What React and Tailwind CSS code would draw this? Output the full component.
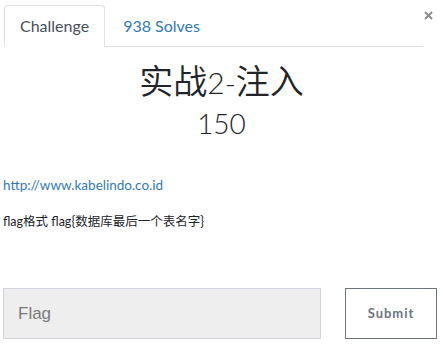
export default function App() {
  return (
    <div className="w-[443px] h-[344px] bg-white relative overflow-hidden" style={{ fontFamily: 'Lato, "Noto Sans CJK SC", sans-serif' }}>
      <div className="pt-[5px] pl-[4px] w-[423px]">
        <div className="flex items-end border-b border-[#dee2e6] h-[42px]">
          <div className="h-[42px] -mb-px px-[15px] flex items-center border border-[#dee2e6] border-b-white bg-white rounded-t-[4px] text-[16px] text-[#495057]">
            Challenge
          </div>
          <div className="h-[41px] ml-[2px] px-[16px] flex items-center text-[16px] text-[#337ab7]">
            938 Solves
          </div>
        </div>
      </div>
      <svg className="absolute left-[424px] top-[11px]" width="9" height="9" viewBox="0 0 9 9">
        <path d="M1 1 L8 8 M8 1 L1 8" stroke="#8c8c8c" strokeWidth="2" />
      </svg>
      <div className="flex flex-col items-center mt-[14px]">
        <div className="text-[34px] leading-[40px] font-[350] text-[#212529]">
          实战<span className="text-[30px] font-light">2-</span>注入
        </div>
        <div className="text-[28px] leading-[34px] font-light text-[#212529] mt-[4px]">150</div>
      </div>
      <div className="pl-[3px] mt-[35px]">
        <div className="text-[13.5px] leading-[20px] text-[#337ab7]">http://www.kabelindo.co.id</div>
        <div className="text-[12.5px] leading-[20px] text-[#212529] mt-[17px]">flag格式 flag{"{"}数据库最后一个表名字{"}"}</div>
      </div>
      <div className="flex pl-[3px] mt-[56px] gap-[24px]">
        <div className="w-[318px] h-[51px] bg-[#eeeeee] border border-[#d0d5dc] flex items-center pl-[14px] text-[17px] text-[#7a7a7a]" style={{ fontFamily: '"Liberation Sans", Arial, sans-serif' }}>
          Flag
        </div>
        <div className="w-[92px] h-[51px] border border-[#6c757d] flex items-center justify-center text-[13px] font-bold tracking-[1px] text-[#6c757d]">
          Submit
        </div>
      </div>
    </div>
  );
}
